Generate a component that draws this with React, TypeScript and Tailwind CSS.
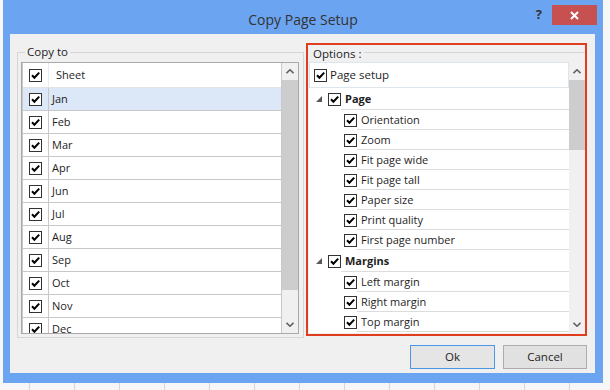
import React from 'react';

const SHEETS = ['Jan', 'Feb', 'Mar', 'Apr', 'Jun', 'Jul', 'Aug', 'Sep', 'Oct', 'Nov', 'Dec'];
const PAGE_ITEMS = ['Orientation', 'Zoom', 'Fit page wide', 'Fit page tall', 'Paper size', 'Print quality', 'First page number'];
const MARGIN_ITEMS = ['Left margin', 'Right margin', 'Top margin'];

function Check() {
  return (
    <span className="flex h-[13px] w-[13px] shrink-0 items-center justify-center border border-[#333] bg-white">
      <svg width="11" height="11" viewBox="0 0 11 11">
        <path d="M2 5.3 L4.4 7.8 L9.2 2.6" fill="none" stroke="#000" strokeWidth="2" />
      </svg>
    </span>
  );
}

function Chevron({ down }: { down?: boolean }) {
  return (
    <svg width="8" height="5" viewBox="0 0 8 5">
      <polyline
        points={down ? '0.5,0.8 4,4.2 7.5,0.8' : '0.5,4.2 4,0.8 7.5,4.2'}
        fill="none"
        stroke="#606060"
        strokeWidth="1.6"
      />
    </svg>
  );
}

function ScrollBar({ upH, thumbH }: { upH: number; thumbH: number }) {
  return (
    <div className="flex w-[16px] shrink-0 flex-col bg-[#f0f0f0]">
      <div className="flex shrink-0 items-center justify-center" style={{ height: upH }}>
        <Chevron />
      </div>
      <div className="shrink-0 bg-[#cdcdcd]" style={{ height: thumbH }} />
      <div className="flex-1" />
      <div className="flex h-[17px] shrink-0 items-center justify-center">
        <Chevron down />
      </div>
    </div>
  );
}

function TreeParent({ label }: { label: string }) {
  return (
    <div className="flex h-[22px] shrink-0 items-center">
      <svg width="6" height="6" viewBox="0 0 6 6" className="ml-[7px] mr-[6px] shrink-0">
        <polygon points="6,0 6,6 0,6" fill="#595959" />
      </svg>
      <Check />
      <div className="flex h-full flex-1 items-center border-b border-[#dcdcdc] pl-[4px] pt-[1px] font-bold">{label}</div>
    </div>
  );
}

function TreeChild({ label }: { label: string }) {
  return (
    <div className="flex h-[20px] shrink-0 items-center pl-[35px]">
      <Check />
      <div className="flex h-full flex-1 items-center border-b border-[#dcdcdc] pl-[4px] pt-[1px]">{label}</div>
    </div>
  );
}

export default function App() {
  return (
    <div className="h-[390px] w-[610px] overflow-hidden bg-[#f7f7f7] bg-[repeating-linear-gradient(90deg,transparent_0px,transparent_29px,#d6d6d6_29px,#d6d6d6_30px,transparent_30px,transparent_45px)] font-['Open_Sans',sans-serif] text-[11px] text-[#1e1e1e]">
      {/* dialog window */}
      <div className="ml-[3px] flex h-[383px] w-[600px] flex-col bg-[#6ba4f0]">
        {/* title bar */}
        <div className="grid h-[34px] shrink-0 grid-cols-[1fr_auto_1fr]">
          <div />
          <div className="flex items-center pt-[4px] text-[14px] text-[#333]">Copy Page Setup</div>
          <div className="flex items-start justify-end pr-[6px] pt-[5px]">
            <div className="flex h-[20px] items-center gap-[10px]">
              <span className="text-[13px] font-bold text-[#333]">?</span>
              <div className="flex h-[20px] w-[45px] items-center justify-center bg-[#c75050]">
                <svg width="9" height="9" viewBox="0 0 9 9">
                  <path d="M1 1 L8 8 M8 1 L1 8" stroke="#fff" strokeWidth="2" />
                </svg>
              </div>
            </div>
          </div>
        </div>

        {/* client area */}
        <div className="ml-[7px] flex h-[339px] w-[585px] flex-col bg-[#f0f0f0] pt-[9px]">
          <div className="flex items-start">
            {/* Copy to */}
            <fieldset className="ml-[7px] mt-[1px] h-[294px] w-[287px] border border-[#d5d5d5] pl-[3px] pr-[4px]">
              <legend className="ml-[4px] px-[2px] text-[11.5px] leading-[16px]">Copy to</legend>
              <div className="mt-[2px] flex h-[272px] w-[278px] border border-[#a9a9a9] bg-white">
                <div className="flex flex-1 flex-col overflow-hidden border-x border-[#c8c8c8]">
                  <div className="flex h-[25px] shrink-0 items-center border-b border-[#e3e3e3]">
                    <div className="flex h-full w-[26px] shrink-0 items-center justify-center border-r border-[#e8edf3]">
                      <Check />
                    </div>
                    <div className="pl-[7px]">Sheet</div>
                  </div>
                  {SHEETS.map((s, i) => (
                    <div
                      key={s}
                      className={`flex h-[23px] shrink-0 items-center border-b border-[#c8c8c8] ${i === 0 ? 'bg-[#dce7f8]' : ''}`}
                    >
                      <div className="flex h-full w-[26px] shrink-0 items-center justify-center border-r border-[#c8c8c8]">
                        <Check />
                      </div>
                      <div className="pl-[3px]">{s}</div>
                    </div>
                  ))}
                </div>
                <ScrollBar upH={17} thumbH={210} />
              </div>
            </fieldset>

            {/* Options */}
            <div className="ml-[2px] flex h-[293px] w-[281px] flex-col border-2 border-[#e03c1e]">
              <div className="flex h-[17px] shrink-0 items-center">
                <span className="pl-[5px] pr-[3px] text-[11.5px]">Options :</span>
                <div className="-mt-[2px] h-px flex-1 bg-[#d5d5d5]" />
              </div>
              <div className="ml-[1px] flex h-[271px] w-[276px] bg-white">
                <div className="flex flex-1 flex-col overflow-hidden">
                  <div className="flex h-[26px] shrink-0 items-center border border-[#dde5ed] pl-[4px]">
                    <Check />
                    <span className="pl-[3px] text-[11.5px]">Page setup</span>
                  </div>
                  <TreeParent label="Page" />
                  {PAGE_ITEMS.map((t) => (
                    <TreeChild key={t} label={t} />
                  ))}
                  <TreeParent label="Margins" />
                  {MARGIN_ITEMS.map((t) => (
                    <TreeChild key={t} label={t} />
                  ))}
                </div>
                <ScrollBar upH={18} thumbH={70} />
              </div>
            </div>
          </div>

          {/* buttons */}
          <div className="mt-[7px] flex justify-end gap-[8px] pr-[8px]">
            <button className="flex h-[24px] w-[85px] items-center justify-center border border-[#4a97e6] bg-[#e5e5e5] text-[11.5px]">
              Ok
            </button>
            <button className="flex h-[24px] w-[84px] items-center justify-center border border-[#adadad] bg-[#e1e1e1] text-[11.5px]">
              Cancel
            </button>
          </div>
        </div>
      </div>
    </div>
  );
}
